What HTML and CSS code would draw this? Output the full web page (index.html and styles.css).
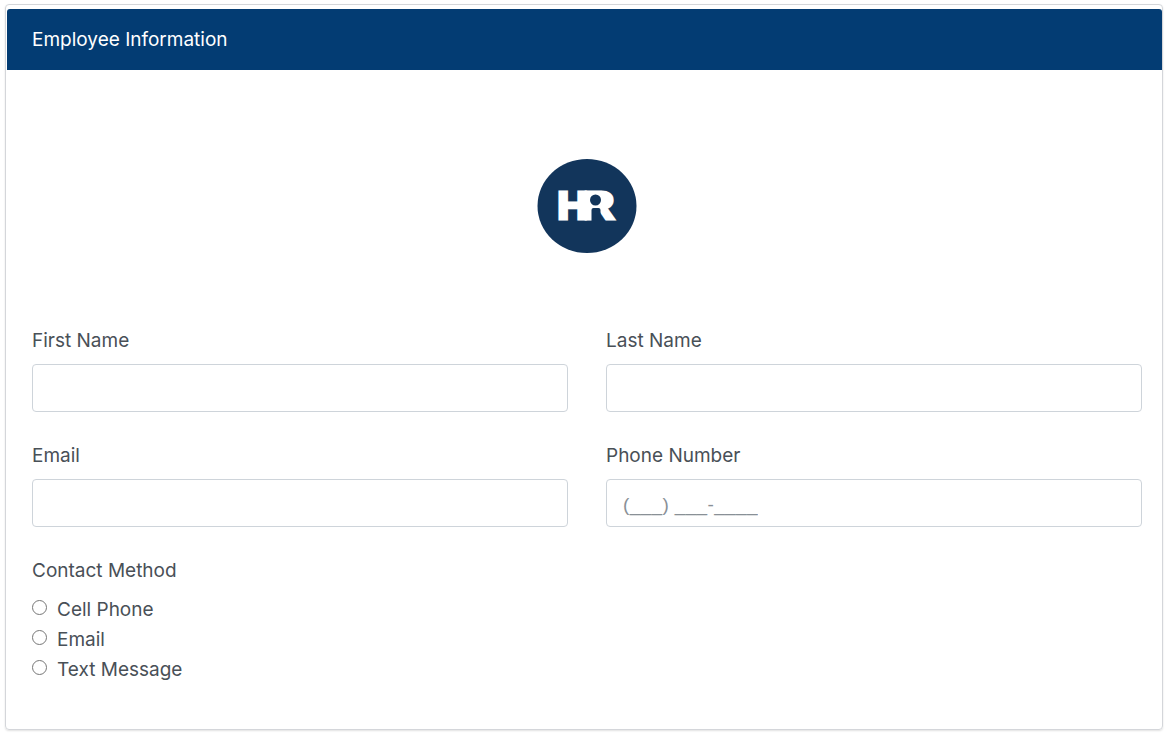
FILE: index.html
```html
<!DOCTYPE html>
<html lang="en">
<head>
    <meta charset="UTF-8">
    <meta name="viewport" content="width=device-width, initial-scale=1.0">
    <title>Employee Information</title>
    <link rel="stylesheet" href="styles.css">
</head>
<body>

    <div class="card">
        <div class="card-header">Employee Information</div>
        <div class="card-body">

            <div class="logo">
                <svg width="100" height="94" viewBox="0 0 100 94" role="img" aria-label="HR">
                    <ellipse cx="50" cy="47" rx="49.5" ry="47" fill="#12355b"/>
                    <text class="logo-text" transform="scale(1.12 1)" x="18" y="60.5">HR</text>
                    <!-- fill the R's counter so the person sits in a solid bowl -->
                    <rect x="52" y="36" width="16" height="12" fill="#fff"/>
                    <circle cx="58.5" cy="41" r="5.5" fill="#12355b"/>
                    <path d="M54.5 63 V51 Q54.5 49 56.5 49 H61.5 Q63.5 49 63.5 51 V63 Z" fill="#12355b"/>
                </svg>
            </div>

            <form class="form-grid">
                <div class="field">
                    <label for="firstName">First Name</label>
                    <input type="text" id="firstName">
                </div>
                <div class="field">
                    <label for="lastName">Last Name</label>
                    <input type="text" id="lastName">
                </div>
                <div class="field">
                    <label for="email">Email</label>
                    <input type="text" id="email">
                </div>
                <div class="field">
                    <label for="phone">Phone Number</label>
                    <input type="text" id="phone" placeholder="(___) ___-____">
                </div>
                <div class="field">
                    <div class="group-label">Contact Method</div>
                    <label class="radio"><input type="radio" name="contact"><span>Cell Phone</span></label>
                    <label class="radio"><input type="radio" name="contact"><span>Email</span></label>
                    <label class="radio"><input type="radio" name="contact"><span>Text Message</span></label>
                </div>
            </form>

        </div>
    </div>

</body>
</html>
```

FILE: styles.css
```css
* { box-sizing: border-box; }
body { margin: 0; padding: 4px 4px 4px 5px; height: 734px; overflow: hidden; background: #fff; font-family: Inter, "Liberation Sans", sans-serif; font-size: 19px; color: #495057; }
.card { height: 726px; border: 1px solid #d4d6da; border-radius: 4px; padding: 4px 0 0 1px; box-shadow: 0 1px 2px rgba(0,0,0,0.12); }
.card-header { height: 61px; padding-left: 25px; background: #033c73; color: #fff; line-height: 61px; border-radius: 3px 3px 0 0; }
.card-body { padding: 89px 20px 0 25px; }
.logo { display: flex; justify-content: center; height: 94px; margin-bottom: 75px; padding-right: 1px; }
.logo-text { font-family: "Liberation Sans", sans-serif; font-weight: 700; font-size: 38px; letter-spacing: -3.9px; fill: #fff; stroke: #fff; stroke-width: 3px; }
.form-grid { display: grid; grid-template-columns: 536px 536px; column-gap: 38px; row-gap: 31px; }
.field label, .group-label { display: block; line-height: 24px; }
.field > label { padding-top: 1px; height: 24px; margin-bottom: 12px; }
.field input[type="text"] { display: block; width: 100%; height: 48px; padding: 2px 15px 0 16px; border: 1px solid #ced4da; border-radius: 4px; font: inherit; color: #495057; outline: none; }
.field input::placeholder { color: #6c757d; opacity: 0.8; font-family: "Liberation Sans", sans-serif; letter-spacing: 0.35px; }
.group-label { padding-top: 1px; height: 24px; margin-bottom: 12px; }
.field > .radio { display: flex; align-items: center; height: 30px; margin-bottom: 0; padding-top: 0; }
.radio input { width: 15px; height: 15px; margin: 0 10px 3px 0; accent-color: #495057; }
.radio span { padding-top: 2px; }
```
